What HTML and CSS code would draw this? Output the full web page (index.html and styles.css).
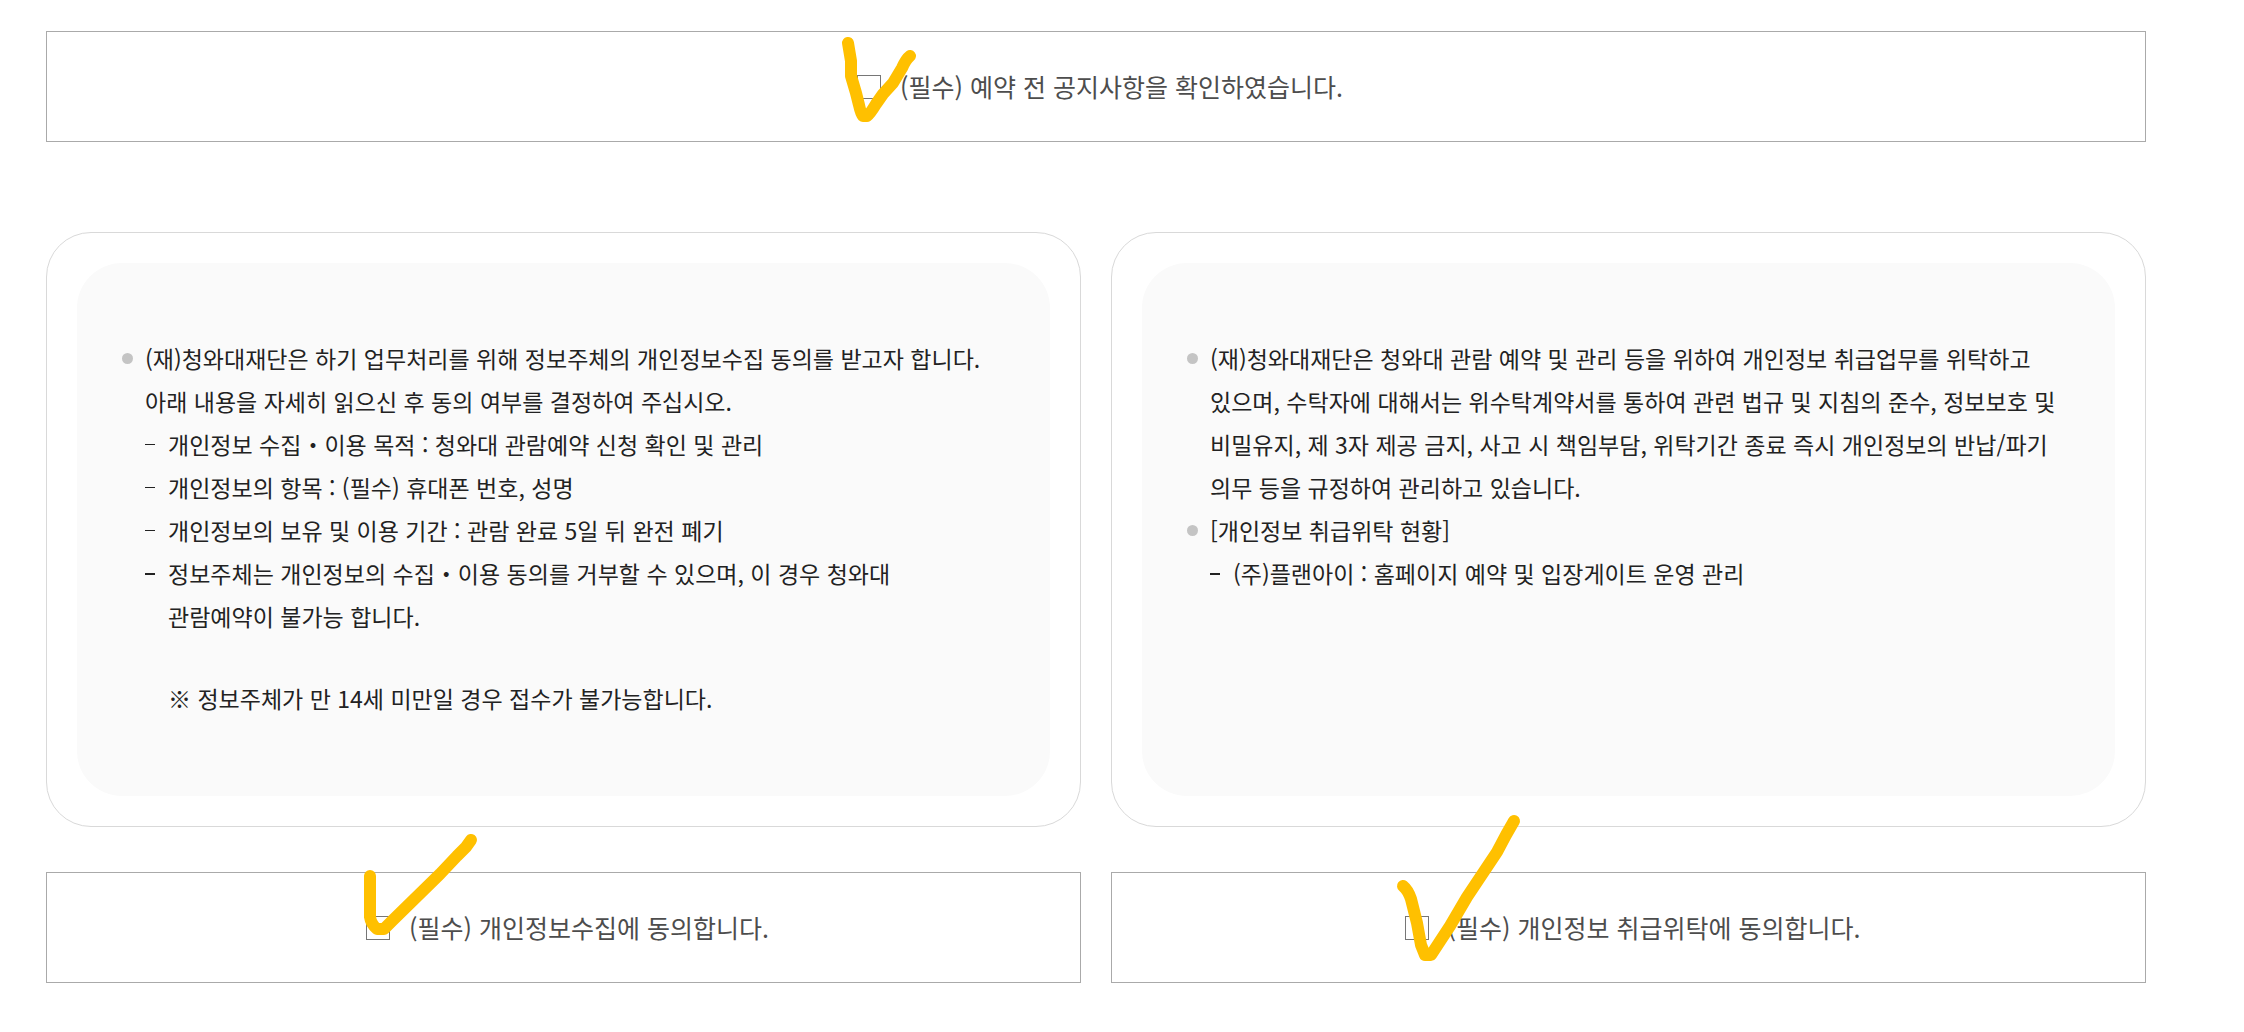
FILE: index.html
```html
<!DOCTYPE html>
<html lang="ko">
<head>
    <meta charset="UTF-8">
    <meta name="viewport" content="width=device-width, initial-scale=1.0">
    <title>관람 예약 동의</title>
    <link rel="stylesheet" href="styles.css">
</head>
<body>
    <!-- Notice confirmation -->
    <div class="agree-box">
        <span class="check">
            <input type="checkbox" id="agree-notice">
            <svg class="mark" viewBox="0 0 24 24" aria-hidden="true"><path d="M-9 -32L-6 -14L-6 1L-1 18L2 30Q4 39 6 41L10 41Q13 39 19 29L26 19L36 8L45 -7Q49 -16 53 -19"/></svg>
        </span>
        <label for="agree-notice">(필수) 예약 전 공지사항을 확인하였습니다.</label>
    </div>

    <div class="terms">
        <!-- Personal data collection -->
        <section class="card">
            <div class="card-inner">
                <ul class="dots">
                    <li>(재)청와대재단은 하기 업무처리를 위해 정보주체의 개인정보수집 동의를 받고자 합니다.<br>아래 내용을 자세히 읽으신 후 동의 여부를 결정하여 주십시오.
                        <ul class="dashes">
                            <li>개인정보 수집・이용 목적 : 청와대 관람예약 신청 확인 및 관리</li>
                            <li>개인정보의 항목 : (필수) 휴대폰 번호, 성명</li>
                            <li>개인정보의 보유 및 이용 기간 : 관람 완료 5일 뒤 완전 폐기</li>
                            <li>정보주체는 개인정보의 수집・이용 동의를 거부할 수 있으며, 이 경우 청와대<br>관람예약이 불가능 합니다.
                                <p class="note">※ 정보주체가 만 14세 미만일 경우 접수가 불가능합니다.</p>
                            </li>
                        </ul>
                    </li>
                </ul>
            </div>
        </section>

        <!-- Personal data entrustment -->
        <section class="card">
            <div class="card-inner">
                <ul class="dots">
                    <li>(재)청와대재단은 청와대 관람 예약 및 관리 등을 위하여 개인정보 취급업무를 위탁하고 있으며, 수탁자에 대해서는 위수탁계약서를 통하여 관련 법규 및 지침의 준수, 정보보호 및 비밀유지, 제 3자 제공 금지, 사고 시 책임부담, 위탁기간 종료 즉시 개인정보의 반납/파기 의무 등을 규정하여 관리하고 있습니다.</li>
                    <li>[개인정보 취급위탁 현황]
                        <ul class="dashes">
                            <li>(주)플랜아이 : 홈페이지 예약 및 입장게이트 운영 관리</li>
                        </ul>
                    </li>
                </ul>
            </div>
        </section>

        <div class="agree-box">
            <span class="check">
                <input type="checkbox" id="agree-collect">
                <svg class="mark" viewBox="0 0 24 24" aria-hidden="true"><path d="M4 -40L4 1Q5 8 11 13L18 13L27 4L74 -42L91 -60L100 -69L105 -76"/></svg>
            </span>
            <label for="agree-collect">(필수) 개인정보수집에 동의합니다.</label>
        </div>

        <div class="agree-box">
            <span class="check">
                <input type="checkbox" id="agree-entrust">
                <svg class="mark" viewBox="0 0 24 24" aria-hidden="true"><path d="M-2 -30Q3 -26 6 -17L12 7L16 29L20 39L26 39L45 10L62 -19L92 -64L101 -81L109 -95"/></svg>
            </span>
            <label for="agree-entrust">(필수) 개인정보 취급위탁에 동의합니다.</label>
        </div>
    </div>
</body>
</html>
```
FILE: styles.css
```css
/* Global styling */
* { box-sizing: border-box; margin: 0; padding: 0; }
body {
    padding: 31px 98px 31px 46px;
    background: #fff; color: #222;
    font-family: "Noto Sans CJK KR", sans-serif; font-size: 23px; line-height: 43px;
    word-break: keep-all;
}
ul { list-style: none; }

/* Agreement boxes */
.agree-box {
    display: flex; align-items: center; justify-content: center; gap: 19px;
    padding: 33px 20px 33px 28px; border: 1px solid #aaa;
    color: #4d4d4d; font-size: 25px;
}
.check { position: relative; width: 24px; height: 24px; }
.check input {
    display: block; width: 24px; height: 24px;
    appearance: none; background: #fff; border: 1px solid #767676; cursor: pointer;
}
.check input:checked { background: #767676; }

/* Hand-drawn check marks */
.mark { position: absolute; top: 0; left: 0; width: 24px; height: 24px; overflow: visible; pointer-events: none; z-index: 1; }
.mark path { fill: none; stroke: #ffc000; stroke-width: 12; stroke-linecap: round; stroke-linejoin: round; }

/* Terms */
.terms { display: grid; grid-template-columns: 1fr 1fr; gap: 45px 30px; margin-top: 90px; }
.card { display: flex; padding: 30px; border: 1px solid #d9d9d9; border-radius: 45px; }
.card-inner { flex: 1; padding: 74px 45px 76px; background: #fafafa; border-radius: 45px; }

/* Lists */
.dots > li, .dashes > li { position: relative; padding-left: 23px; }
.dots > li::before {
    content: ""; position: absolute; top: 16px; left: 0;
    width: 11px; height: 11px; border-radius: 50%; background: #c4c4c4;
}
.dashes > li::before {
    content: ""; position: absolute; top: 21px; left: 0;
    width: 10px; height: 1px; background: #222;
}
.dashes > li:last-child::before { height: 2px; }
.note { margin-top: 39px; }
```
